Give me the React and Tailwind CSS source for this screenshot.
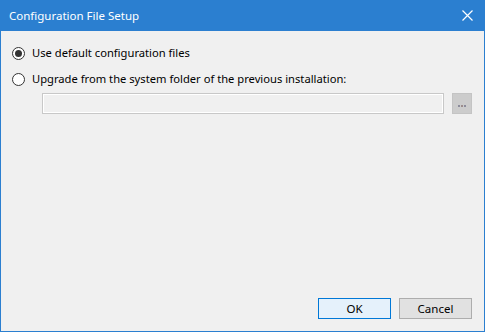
import React from 'react';

const font = { fontFamily: '"Noto Sans", "Open Sans", sans-serif' };

const Radio = ({ checked, label }) => (
  <label className="flex items-center h-4 text-[11.2px] text-[#000]">
    <span className="w-[13px] h-[13px] rounded-full border border-[#333] bg-white flex items-center justify-center">
      {checked && <span className="w-[7px] h-[7px] rounded-full bg-[#333]" />}
    </span>
    <span className="ml-[7px]">{label}</span>
  </label>
);

const App = () => {
  return (
    <div
      className="w-[485px] h-[332px] flex flex-col bg-[#f0f0f0] border-x border-b border-[#2b7fd0]"
      style={font}
    >
      <div className="h-[31px] shrink-0 bg-[#2b7fd0] flex items-center justify-between pl-[9px] pr-[10px] -mx-px">
        <span className="text-white text-[11.5px]">Configuration File Setup</span>
        <svg width="11" height="11" viewBox="0 0 11 11" className="mr-[2px]">
          <path d="M0.5 0.5L10.5 10.5M10.5 0.5L0.5 10.5" stroke="white" strokeWidth="1.2" />
        </svg>
      </div>

      <div className="flex-1 flex flex-col pl-[11px] pt-[14px]">
        <Radio checked label="Use default configuration files" />
        <div className="mt-[10px]">
          <Radio label="Upgrade from the system folder of the previous installation:" />
        </div>
        <div className="flex items-center mt-[6px] ml-[30px]">
          <div className="w-[402px] h-[21px] border border-[#c8c8c8] bg-[#f0f0f0] shadow-[inset_0_0_0_1px_#ffffff]" />
          <div className="ml-[8px] w-[20px] h-[21px] border border-[#c4c4c4] bg-[#cccccc] flex items-end justify-center gap-px pb-[6px]">
            <span className="w-[2px] h-[2px] bg-[#8c8c9c]" />
            <span className="w-[2px] h-[2px] bg-[#9c8c8c]" />
            <span className="w-[2px] h-[2px] bg-[#8c8c9c]" />
          </div>
        </div>
      </div>

      <div className="flex justify-end gap-[8px] pr-[12px] pb-[12px]">
        <button className="w-[73px] h-[21px] border border-[#0078d7] bg-[#e5f1fb] text-[11.5px] text-black">
          OK
        </button>
        <button className="w-[73px] h-[21px] border border-[#adadad] bg-[#e1e1e1] text-[11.5px] text-black">
          Cancel
        </button>
      </div>
    </div>
  );
};

export default App;
